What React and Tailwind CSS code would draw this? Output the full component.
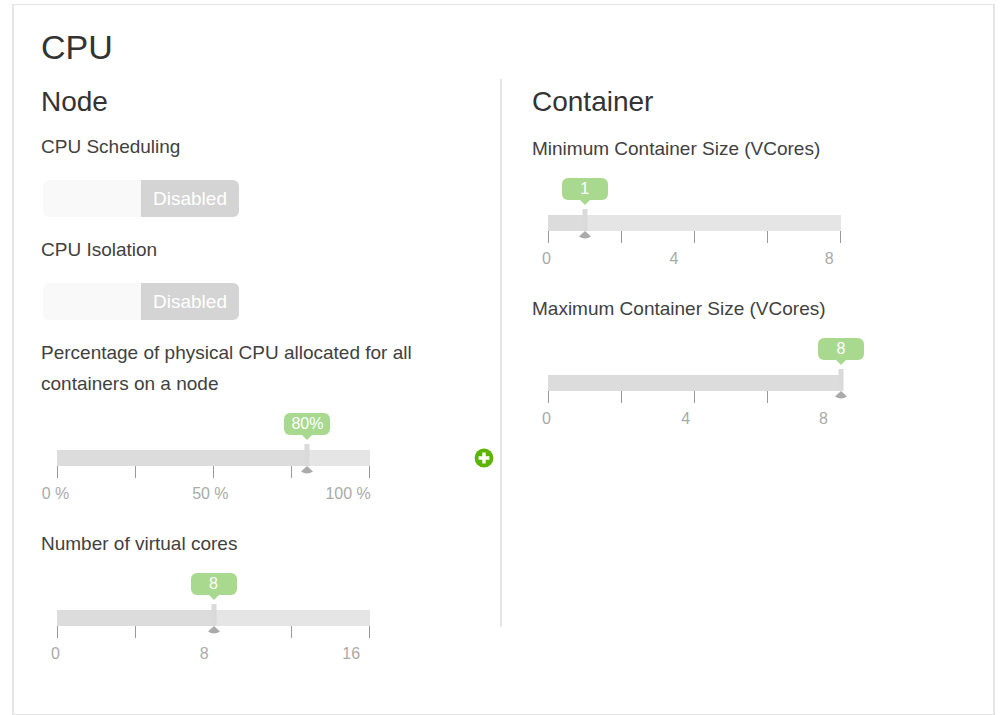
import { useId, useState } from "react";

function FieldLabel({ htmlFor, children }) {
  return (
    <label htmlFor={htmlFor} className="block text-[19px] leading-[31px] text-[#414141]">
      {children}
    </label>
  );
}

function Toggle({ label }) {
  const id = useId();
  const [on, setOn] = useState(false);
  return (
    <div className="mb-[17px]">
      <FieldLabel htmlFor={id}>{label}</FieldLabel>
      <button
        id={id}
        type="button"
        role="switch"
        aria-checked={on}
        onClick={() => setOn(!on)}
        className="mt-[18px] ml-0.5 flex h-[37px] w-[196px] overflow-hidden rounded-md bg-[#f9f9f9] text-[19px] leading-[37px] text-white"
      >
        <span className={on ? "flex-1 bg-[#a8d98f]" : "flex-1"}>{on ? "Enabled" : ""}</span>
        <span className={on ? "flex-1" : "flex-1 bg-[#d4d4d4]"}>{on ? "" : "Disabled"}</span>
      </button>
    </div>
  );
}

function Slider({ id, max, initial, unit = "", marks, width }) {
  const [value, setValue] = useState(initial);
  const percent = `${(value / max) * 100}%`;
  return (
    <div className={`relative ml-4 w-full ${width}`}>
      <div className="relative h-[37px]">
        <output
          htmlFor={id}
          className="absolute top-0 h-[22px] w-[46px] -translate-x-1/2 rounded-md bg-[#a8d98f] text-center text-[16px] leading-[22px] text-white"
          style={{ left: percent }}
        >
          {value}
          {unit}
          <svg className="absolute top-full left-1/2 -translate-x-1/2" width="10" height="5" viewBox="0 0 10 5" aria-hidden="true">
            <path d="M0 0H10L5 5Z" fill="#a8d98f" />
          </svg>
        </output>
      </div>
      <div className="relative h-4 bg-[#e5e5e5]">
        <div className="h-full bg-[#dcdcdc]" style={{ width: percent }} />
        <div className="absolute -top-1.5 bottom-0 w-[5px] -translate-x-1/2 bg-[#dadada]" style={{ left: percent }} />
        <svg
          className="absolute top-full z-10 -translate-x-1/2"
          style={{ left: percent }}
          width="12"
          height="8"
          viewBox="0 0 12 8"
          aria-hidden="true"
        >
          <path d="M6 0L12 5.5Q9 7.5 6 7.5T0 5.5Z" fill="#aaaaaa" />
        </svg>
        <input
          id={id}
          type="range"
          min="0"
          max={max}
          value={value}
          onChange={(e) => setValue(Number(e.target.value))}
          className="absolute inset-0 z-20 h-full w-full cursor-pointer opacity-0"
        />
      </div>
      <div className="flex h-3 justify-between">
        {[0, 1, 2, 3, 4].map((tick) => (
          <span key={tick} className={value * 4 === tick * max ? "w-px" : "w-px bg-[#999999]"} />
        ))}
      </div>
      <div className="relative mt-1.5 h-5 text-[16px] leading-5 text-[#aaaaaa]">
        {marks.map(([text, at]) => (
          <span key={text} className="absolute -translate-x-1/2 whitespace-nowrap" style={{ left: `${at}%` }}>
            {text}
          </span>
        ))}
      </div>
    </div>
  );
}

function SliderField({ label, action, ...slider }) {
  const id = useId();
  return (
    <div>
      <FieldLabel htmlFor={id}>{label}</FieldLabel>
      <div className="mt-3.5 flex items-start justify-between">
        <Slider id={id} {...slider} />
        {action}
      </div>
    </div>
  );
}

function AddButton() {
  return (
    <button type="button" aria-label="Add override" className="mt-[35px] mr-[6px] shrink-0">
      <svg width="20" height="20" viewBox="0 0 20 20" aria-hidden="true">
        <circle cx="10" cy="10" r="9.4" fill="#5ab400" />
        <path d="M10 4.6V15.4M4.6 10H15.4" stroke="#ffffff" strokeWidth="3.4" />
      </svg>
    </button>
  );
}

export default function App() {
  return (
    <main className="bg-white pt-1 pr-[5px] pl-3 font-['Liberation_Sans',Arial,sans-serif] text-[#333333]">
      <section className="border-x-2 border-y border-[#e5e5e5] pt-[22px] pr-[26px] pb-[50px] pl-[27px]">
        <h1 className="text-[34px] leading-10">CPU</h1>
        <div className="mt-3 grid grid-cols-[459fr_467fr]">
          <section className="pt-[5px]">
            <h2 className="mb-[11px] text-[28px] leading-9">Node</h2>
            <Toggle label="CPU Scheduling" />
            <Toggle label="CPU Isolation" />
            <div className="flex flex-col gap-6">
              <SliderField
                label="Percentage of physical CPU allocated for all containers on a node"
                max={100}
                initial={80}
                unit="%"
                width="max-w-[313px]"
                marks={[["0 %", -0.5], ["50 %", 49], ["100 %", 93]]}
                action={<AddButton />}
              />
              <SliderField
                label="Number of virtual cores"
                max={16}
                initial={8}
                width="max-w-[313px]"
                marks={[["0", -0.5], ["8", 47], ["16", 94]]}
              />
            </div>
          </section>
          <section className="mb-[37px] border-l-2 border-[#e5e5e5] pt-[5px] pl-[30px]">
            <h2 className="mb-[13px] text-[28px] leading-9">Container</h2>
            <div className="flex flex-col gap-6">
              <SliderField
                label="Minimum Container Size (VCores)"
                max={8}
                initial={1}
                width="max-w-[293px]"
                marks={[["0", -0.5], ["4", 43], ["8", 96]]}
              />
              <SliderField
                label="Maximum Container Size (VCores)"
                max={8}
                initial={8}
                width="max-w-[293px]"
                marks={[["0", -0.5], ["4", 47], ["8", 94]]}
              />
            </div>
          </section>
        </div>
      </section>
    </main>
  );
}
